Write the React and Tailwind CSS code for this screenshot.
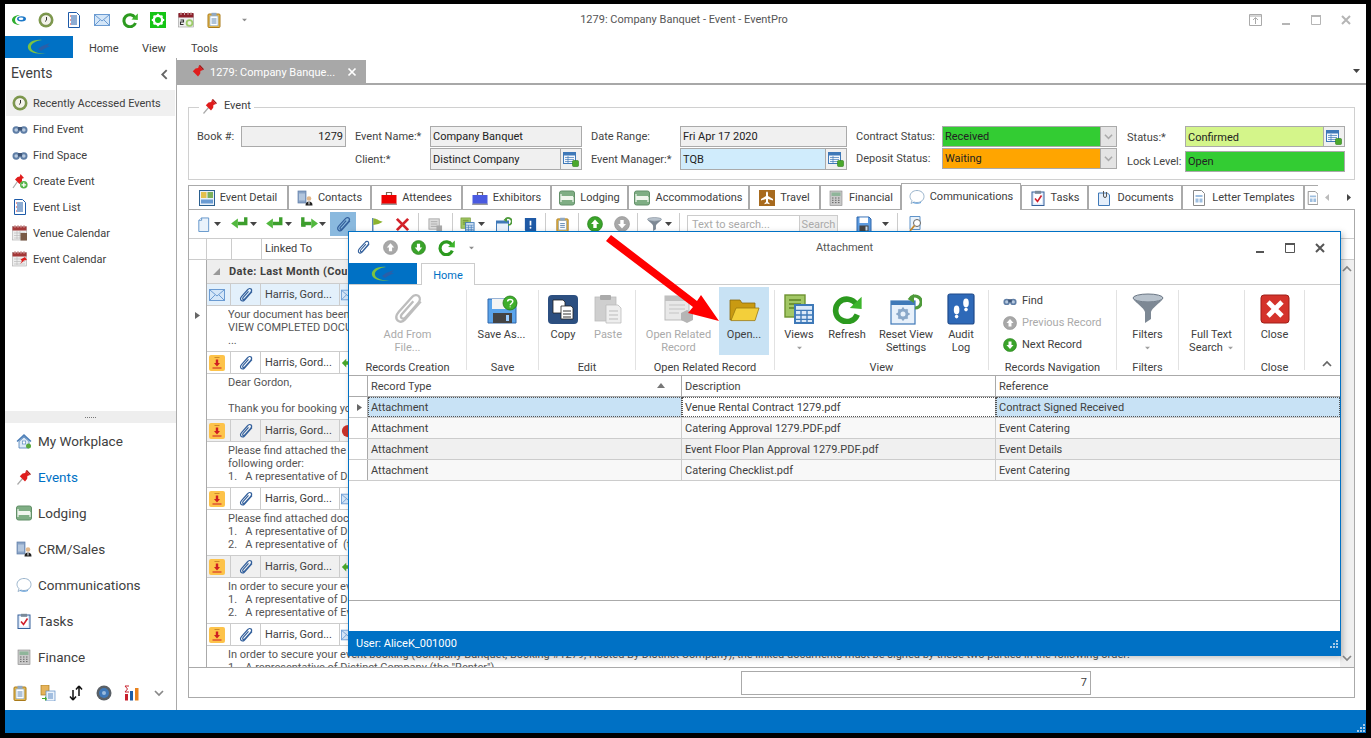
import React from "react";

const S = ({ s = 16, v = 16, children, cls = "" }) => (
  <svg viewBox={`0 0 ${v} ${v}`} width={s} height={s} className={"shrink-0 " + cls}>{children}</svg>
);

const Logo = () => (
  <svg viewBox="0 0 68 22" width={68} height={22} className="shrink-0">
    <path d="M37 4C27 3 22 8 23 12c1 4 8 7 19 5-8 1-15-1-16-5-1-4 4-7 11-8z" fill="#7cc242" />
    <path d="M33 13l4-3 8-3-3 3 3 0-6 3-3 2z" fill="#2a5fa8" />
  </svg>
);
const LogoSmall = ({ s = 16 }) => (
  <S s={s}>
    <path d="M9 3C4 3 1 5.500 1 8s3 5 8 5c-3-.5-5-2.500-5-5s2-4.500 5-5z" fill="#2fae2f" />
    <ellipse cx="10.500" cy="6.800" rx="4.500" ry="2.600" fill="#1c78c8" />
    <ellipse cx="10" cy="6.800" rx="2.400" ry="1.200" fill="#fff" />
  </S>
);
const Clock = ({ s = 16 }) => (
  <S s={s}>
    <circle cx="8" cy="8" r="7.500" fill="#7f9a4e" />
    <circle cx="8" cy="8" r="5.300" fill="#f3f3ea" stroke="#5c7434" strokeWidth=".6" />
    <path d="M8.500 5v3.200L7 9.500" stroke="#333" strokeWidth="1" fill="none" />
  </S>
);
const Doc = ({ s = 16 }) => (
  <S s={s}>
    <path d="M2.500.5h8l3 3v12h-11z" fill="#fff" stroke="#1d5aa8" />
    <path d="M5 4h6M5 6h6M5 8h6M5 10h6M5 12h6" stroke="#1d5aa8" strokeWidth="1" />
    <path d="M4 4h1M4 8h1M4 12h1" stroke="#d33" strokeWidth="1" />
  </S>
);
const Mail = ({ s = 16 }) => (
  <S s={s}>
    <rect x=".5" y="2.500" width="15" height="11" fill="#d4e6f8" stroke="#6b9bd2" />
    <path d="M1 3l7 6 7-6M1 13l5-5M15 13l-5-5" stroke="#6b9bd2" fill="none" />
  </S>
);
const Refresh = ({ s = 16 }) => (
  <S s={s}>
    <path d="M13 5.500A6 6 0 1 0 13.500 11" fill="none" stroke="#2c9a1f" strokeWidth="3" />
    <path d="M9.500 7.500L15.800 8V1.500z" fill="#3db52c" />
  </S>
);
const GearBox = ({ s = 16 }) => (
  <S s={s}>
    <rect width="16" height="16" fill="#15c515" />
    <circle cx="8" cy="8" r="4.200" fill="none" stroke="#fff" strokeWidth="2.400" />
    <path d="M8 1.800v2.400M8 11.800v2.400M1.800 8h2.400M11.800 8h2.400M3.600 3.600l1.700 1.700M10.700 10.700l1.700 1.700M3.600 12.400l1.700-1.700M10.700 5.300l1.700-1.700" stroke="#fff" strokeWidth="1.800" />
  </S>
);
const Cal20 = ({ s = 16 }) => (
  <S s={s}>
    <rect x=".5" y="2" width="15" height="13" fill="#eee" stroke="#999" strokeWidth=".6" />
    <rect x=".5" y="1" width="15" height="4.500" fill="#8c1f2a" />
    <path d="M3 0v3M6.500 0v3M10 0v3M13 0v3" stroke="#caa" />
    <circle cx="11.500" cy="11" r="3.800" fill="#9ccb6a" />
    <circle cx="11.500" cy="11" r="2" fill="#eef5e0" />
    <path d="M2.500 8h3v2h-3v2.500h3" stroke="#333" strokeWidth="1.100" fill="none" />
  </S>
);
const Clipboard = ({ s = 16 }) => (
  <S s={s}>
    <rect x="2" y="2" width="12" height="13.500" rx="1" fill="#e9b94a" stroke="#a97a1a" />
    <rect x="4" y="4" width="8" height="9.800" fill="#fff" stroke="#7aa0c8" strokeWidth=".6" />
    <rect x="5.500" y=".8" width="5" height="3" fill="#8fa8c4" />
    <path d="M5.500 7h5M5.500 9h5M5.500 11h5" stroke="#5d86b3" />
  </S>
);
const Binoc = ({ s = 16 }) => (
  <S s={s}>
    <circle cx="4.200" cy="9" r="3.700" fill="#5f7ea6" />
    <circle cx="11.800" cy="9" r="3.700" fill="#5f7ea6" />
    <rect x="6" y="6" width="4" height="3.500" fill="#3f5678" />
    <circle cx="4.200" cy="9" r="1.800" fill="#b8cadf" />
    <circle cx="11.800" cy="9" r="1.800" fill="#b8cadf" />
  </S>
);
const Pin = ({ s = 16 }) => (
  <S s={s}>
    <path d="M1.500 15.500L7 9" stroke="#aaa" strokeWidth="1.200" />
    <path d="M6.500 4.500L3.800 7.200 9 12.500l2.200-2.700.2-2.800L14 6 10 1.500 9.200 4z" fill="#e01c1c" />
    <path d="M10 1.500L14 6l1-.7L11 1z" fill="#a01010" />
  </S>
);
const PinPlus = ({ s = 16 }) => (
  <S s={s}>
    <path d="M1 15L5.500 8.500" stroke="#aaa" strokeWidth="1.200" />
    <path d="M5.500 4L3 6.500 7.500 11 10 8.500l0-2.800L12 5 8.500 1 7.800 3.500z" fill="#e01c1c" />
    <circle cx="11.800" cy="11.800" r="3.800" fill="#56b548" />
    <path d="M11.800 9.500v4.600M9.500 11.800h4.600" stroke="#fff" strokeWidth="1.300" />
  </S>
);
const CalV = ({ s = 16 }) => (
  <S s={s}>
    <rect x=".5" y="1.500" width="14" height="13.500" fill="#eee" stroke="#aaa" strokeWidth=".6" />
    <rect x=".5" y="1.500" width="14" height="4" fill="#a43838" />
    <path d="M3 0v3M6 0v3M9 0v3M12 0v3" stroke="#c88" />
    <path d="M2 8h11M2 10.500h11M2 13h11M5 6v8M8 6v8" stroke="#bbb" strokeWidth=".7" />
    <rect x="8.500" y="8" width="6.500" height="7.500" fill="#7a5a46" />
  </S>
);
const CalE = ({ s = 16 }) => (
  <S s={s}>
    <rect x=".5" y="1.500" width="14" height="13.500" fill="#eee" stroke="#aaa" strokeWidth=".6" />
    <rect x=".5" y="1.500" width="14" height="4" fill="#a43838" />
    <path d="M3 0v3M6 0v3M9 0v3M12 0v3" stroke="#c88" />
    <path d="M2 8h11M2 10.500h11M2 13h11M5 6v8" stroke="#bbb" strokeWidth=".7" />
    <path d="M8 13l2-3-1.500-1.500L13 6l2 3-3 .5-1.500 1.500z" fill="#e01c1c" />
  </S>
);
const House = ({ s = 16 }) => (
  <S s={s}>
    <path d="M.5 8L8 1l7.500 7-1.300 1L8 3.500 1.800 9z" fill="#4d7fb8" />
    <path d="M3 8.500V15h10V8.500L8 4z" fill="#dce9f6" stroke="#4d7fb8" strokeWidth=".8" />
    <rect x="6.300" y="8" width="3.400" height="3" fill="#fff" stroke="#4d7fb8" strokeWidth=".6" />
    <circle cx="12.500" cy="13" r="2.500" fill="#56a83c" />
  </S>
);
const Bed = ({ s = 16 }) => (
  <S s={s}>
    <rect x=".5" y="1" width="15" height="14" rx="2" fill="#7fae84" stroke="#628f68" />
    <rect x="2" y="6" width="12" height="4" fill="#f1f6ee" />
    <path d="M2 4v8M14 7v5" stroke="#f1f6ee" strokeWidth="1.200" />
  </S>
);
const Crm = ({ s = 16 }) => (
  <S s={s}>
    <rect x="1" y="1" width="8" height="12" fill="#8aa4c6" stroke="#5d7ca6" strokeWidth=".7" />
    <path d="M3 3.500v7M5 3.500v7M7 3.500v7" stroke="#dce8f5" strokeWidth="1" />
    <circle cx="12" cy="8.500" r="2.300" fill="#e2b88c" />
    <path d="M8.500 15.500c0-3 1.500-4 3.500-4s3.500 1 3.500 4z" fill="#222" />
    <path d="M11.500 11.500h1v3h-1z" fill="#fff" />
  </S>
);
const Bubble = ({ s = 16 }) => (
  <S s={s}>
    <path d="M8 1.500c4 0 7 2.500 7 6s-3 6-7 6c-1 0-2 0-3-.5l-3 1.500 1-2.800C1.800 10.500 1 9 1 7.500c0-3.500 3-6 7-6z" fill="#fff" stroke="#9ab4cc" />
    <path d="M4 13.500c2 1 6 1 8 0" stroke="#5a9ad8" fill="none" />
  </S>
);
const Tasks = ({ s = 16 }) => (
  <S s={s}>
    <rect x="2" y="2" width="12" height="13.500" fill="#dfeafa" stroke="#36609a" />
    <rect x="4" y="4" width="8" height="9.500" fill="#fff" />
    <rect x="5" y=".8" width="6" height="3" fill="#7a8a99" />
    <path d="M5 8.500L7.500 11.500 11.500 5.500" stroke="#d0202c" strokeWidth="1.600" fill="none" />
  </S>
);
const Calc = ({ s = 16 }) => (
  <S s={s}>
    <rect x="2" y="1" width="12" height="14.500" fill="#c9c9c9" stroke="#888" strokeWidth=".6" />
    <rect x="3.500" y="2.500" width="9" height="3.500" fill="#8fb59a" />
    <path d="M4 8h1.500M7 8h1.500M10 8h1.500M4 10.300h1.500M7 10.300h1.500M10 10.300h1.500M4 12.600h1.500M7 12.600h1.500M10 12.600h1.500" stroke="#666" />
  </S>
);
const Transfer = ({ s = 16 }) => (
  <S s={s}>
    <path d="M5 5v10M5 15l-3-3.500M5 15l3-3.500M11 11V1M11 1L8 4.500M11 1l3 3.500" stroke="#111" strokeWidth="1.500" fill="none" />
  </S>
);
const Disc = ({ s = 16 }) => (
  <S s={s}>
    <circle cx="8" cy="8" r="7.500" fill="#5a6066" />
    <circle cx="8" cy="8" r="5" fill="#3f78b8" />
    <circle cx="8" cy="8" r="2" fill="#9bbcde" />
  </S>
);
const Chart = ({ s = 16 }) => (
  <S s={s}>
    <path d="M5 1H1l2.500 3L1 7h4" stroke="#c8202c" fill="none" strokeWidth="1" />
    <rect x="1" y="9" width="3" height="6.500" fill="#c8202c" />
    <rect x="6" y="6" width="3" height="9.500" fill="#1c5fa8" />
    <rect x="11" y="3" width="3.500" height="12.500" fill="#e8821e" />
  </S>
);
const DocTrans = ({ s = 16 }) => (
  <S s={s}>
    <rect x="1" y="0" width="8" height="10" fill="#e6b35a" stroke="#a77b22" strokeWidth=".7" />
    <rect x="6" y="6" width="9" height="10" fill="#eaf2fb" stroke="#5a8ac4" strokeWidth=".7" />
    <path d="M8 9h5M8 11h5M8 13h5" stroke="#5a8ac4" />
    <path d="M2 13h3v-2l2 3-2 2v-2H2z" fill="#43a82c" />
  </S>
);
const Panels = ({ s = 16 }) => (
  <S s={s}>
    <rect x=".5" y=".5" width="15" height="15" fill="#e8f0f8" stroke="#2a5f8f" />
    <rect x="2" y="2" width="5.500" height="6" fill="#e2c04c" />
    <rect x="8.500" y="2" width="5.500" height="6" fill="#7cb05a" />
    <rect x="2" y="9.500" width="12" height="4" fill="#6a9bd2" />
  </S>
);
const Box = ({ s = 16, c = "#e00" }) => (
  <S s={s}>
    <rect x=".5" y="5" width="15" height="10" fill={c} />
    <rect x=".5" y="13.500" width="15" height="1.500" fill="#999" />
    <path d="M5.500 5V2.500h5V5" stroke="#7a6a5a" strokeWidth="1.200" fill="none" />
  </S>
);
const Plane = ({ s = 16 }) => (
  <S s={s}>
    <rect width="16" height="16" fill="#a76a1e" />
    <path d="M8 1.500c.8 0 1 1 1 2v2.500l5 3v1.500l-5-1.500v3l1.500 1.200v1L8 13.500l-2.500.7v-1L7 12V9L2 10.500V9l5-3V3.500c0-1 .2-2 1-2z" fill="#fff" />
  </S>
);
const DocClip = ({ s = 16 }) => (
  <S s={s}>
    <path d="M2.500 3h9l2 2v10.500h-11z" fill="#e4eefa" stroke="#3f79b8" />
    <path d="M7.500 1v5a1.500 1.500 0 0 0 3 0V2" stroke="#555" fill="none" />
  </S>
);
const Template = ({ s = 16 }) => (
  <S s={s}>
    <path d="M2.500.5h8l3 3v12h-11z" fill="#fff" stroke="#888" />
    <path d="M4.500 5h7v2h-7zM4.500 8.500h3v4h-3zM8.500 8.500h3v4h-3z" fill="#9fbfe0" />
  </S>
);
const Clip = ({ s = 16, c = "#33609c", w = 1.2 }) => (
  <S s={s}>
    <path d="M14 4.500L6.500 13c-1.800 2-4.300.5-4-1.500.2-.9.6-1.500 1.200-2.200L9.800 2.500c1-1.200 2.600-1.300 3.300-.5s.6 2.200-.4 3.300L6.800 12c-.7.800-1.700.6-2 .1s-.1-1.100.4-1.700l5.300-6" fill="none" stroke={c} strokeWidth={w} />
  </S>
);
const NewDoc = ({ s = 16 }) => (
  <S s={s}>
    <path d="M3 3.500L6 1h7.500v14.500H3z" fill="#e9f2fb" stroke="#5f93c9" />
    <path d="M3 3.500h3V1" fill="#fff" stroke="#5f93c9" />
  </S>
);
const GreenBack = ({ s = 16 }) => (
  <S s={s}>
    <path d="M14 2v5.500H7" fill="none" stroke="#3c9e2c" strokeWidth="3" />
    <path d="M7 3L1 7.500 7 12z" fill="#52b83f" />
  </S>
);
const GreenBoth = ({ s = 16 }) => (
  <S s={s}>
    <path d="M2.500 2v5.500H10" fill="none" stroke="#3c9e2c" strokeWidth="3" />
    <path d="M10 3l6 4.500-6 4.500z" fill="#52b83f" />
    <path d="M1 7.500h4v3H1z" fill="#3c9e2c" />
  </S>
);
const Flag = ({ s = 16 }) => (
  <S s={s}>
    <path d="M3 1v15" stroke="#2f5f9c" strokeWidth="1.200" />
    <path d="M3.500 1.500c4 0 5 2 10 3.500-3 2-6 3-10 3.500z" fill="#8cb32f" />
  </S>
);
const RedX = ({ s = 16 }) => (
  <S s={s}>
    <path d="M2 2l12 12M14 2L2 14" stroke="#d3222a" strokeWidth="3" />
  </S>
);
const GrayGrid = ({ s = 16 }) => (
  <S s={s}>
    <rect x="1" y="2" width="11" height="11" fill="#ddd" stroke="#aaa" />
    <path d="M3 5h7M3 7.500h7M3 10h7" stroke="#aaa" />
    <rect x="9" y="9" width="6" height="6" fill="#aaa" />
  </S>
);
const Views = ({ s = 16 }) => (
  <S s={s}>
    <rect x="1" y="1" width="10" height="11" fill="#a2c765" stroke="#6d9330" strokeWidth=".7" />
    <path d="M3 3.500h6M3 5.500h6M3 7.500h3" stroke="#5d8226" strokeWidth=".8" />
    <rect x="6" y="6" width="9" height="9" fill="#dbe9f8" stroke="#3f79b8" />
    <path d="M6.500 8.700h8M6.500 11h8M6.500 13.200h8M9 8.700V15M12 8.700V15" stroke="#3f79b8" strokeWidth=".7" />
  </S>
);
const WinBack = ({ s = 16 }) => (
  <S s={s}>
    <rect x=".5" y="5" width="12" height="10.500" fill="#e8f1fb" stroke="#3f79b8" />
    <rect x=".5" y="5" width="12" height="2.500" fill="#3f79b8" />
    <path d="M9 4a3.500 3.500 0 1 1 3 5" fill="none" stroke="#4e9a3a" strokeWidth="1.700" />
    <path d="M7.500 4L11 1.500V6z" fill="#4e9a3a" />
  </S>
);
const WinGear = ({ s = 16 }) => (
  <S s={s}>
    <rect x=".5" y="4" width="12" height="11.500" fill="#e8f1fb" stroke="#3f79b8" strokeWidth=".6" />
    <rect x=".5" y="4" width="12" height="2" fill="#3f79b8" />
    <circle cx="6.500" cy="10.500" r="2" fill="none" stroke="#8aa8c9" strokeWidth="1.500" />
    <path d="M6.500 7.200v1M6.500 12.800v1M3.200 10.500h1M8.800 10.500h1M4.200 8.200l.7.700M8.100 12.100l.7.700M4.200 12.800l.7-.7M8.100 8.900l.7-.7" stroke="#8aa8c9" />
    <path d="M10 3a3 3 0 1 1 2.500 4.500" fill="none" stroke="#4e9a3a" strokeWidth="1.600" />
    <path d="M8.800 3L12 .5V5z" fill="#4e9a3a" />
  </S>
);
const BookAlert = ({ s = 16 }) => (
  <S s={s}>
    <path d="M2 1h12v14.500H4a2 2 0 0 1-2-2z" fill="#1f5aa6" />
    <path d="M8 4v5" stroke="#fff" strokeWidth="1.800" />
    <circle cx="8" cy="11.500" r="1" fill="#fff" />
  </S>
);
const BookFeet = ({ s = 16 }) => (
  <S s={s}>
    <rect x="1.500" y=".5" width="13" height="15" rx="1" fill="#2e69b8" stroke="#1f4a8a" strokeWidth=".6" />
    <ellipse cx="10.500" cy="5" rx="1.400" ry="2.200" fill="#fff" />
    <circle cx="10.500" cy="8.300" r=".9" fill="#fff" />
    <ellipse cx="5.800" cy="8.500" rx="1.400" ry="2.200" fill="#fff" />
    <circle cx="5.800" cy="11.800" r=".9" fill="#fff" />
  </S>
);
const CircArrow = ({ s = 16, up, gray }) => (
  <S s={s}>
    <circle cx="8" cy="8" r="7.500" fill={gray ? "#a8a8a8" : "#3aa32a"} stroke={gray ? "#8f8f8f" : "#237a18"} strokeWidth=".6" />
    <path d={up ? "M8 3.500L4 8h2.300v4h3.400V8H12z" : "M8 12.500L4 8h2.300V4h3.400v4H12z"} fill="#fff" />
  </S>
);
const Funnel = ({ s = 16 }) => (
  <S s={s}>
    <ellipse cx="8" cy="2.500" rx="7.500" ry="2" fill="#b8c2cc" stroke="#6a7684" strokeWidth=".5" />
    <path d="M.6 3C2 5 6 7.500 6.500 9.500V15L9.500 13V9.500C10 7.500 14 5 15.400 3 13 5 3 5 .6 3z" fill="#7d8894" />
  </S>
);
const Save = ({ s = 16 }) => (
  <S s={s}>
    <path d="M1 1h12l2 2v12.500H1z" fill="#5d9be0" stroke="#2f66ac" />
    <rect x="3.500" y="1.500" width="8.500" height="5.500" fill="#fff" />
    <rect x="3.500" y="9.500" width="9" height="6" fill="#444" />
    <rect x="9.500" y="10.500" width="2" height="4" fill="#cde" />
  </S>
);
const DocSearch = ({ s = 16 }) => (
  <S s={s}>
    <path d="M3 .5h10v13H3z" fill="#e9f2fb" stroke="#5f93c9" />
    <circle cx="10" cy="7" r="3.500" fill="#fff" stroke="#666" />
    <path d="M7.500 9.500L3 15" stroke="#c88a2c" strokeWidth="1.800" />
  </S>
);
const Imp = ({ s = 16 }) => (
  <S s={s}>
    <rect width="16" height="16" rx="2" fill="#fdc34a" />
    <path d="M6.800 4.500h2.400V8H11L8 11.500 5 8h1.800z" fill="#cf1f22" />
    <path d="M3.500 13h9" stroke="#cf1f22" />
    <path d="M5.500 2.500h5" stroke="#cc8a2c" />
  </S>
);
const LookupBtn = () => (
  <S s={16}>
    <rect x=".5" y="1.500" width="12" height="11" fill="#f3f7fc" stroke="#3f79b8" />
    <rect x=".5" y="1.500" width="12" height="3" fill="#3f79b8" />
    <path d="M2 6.500h9M2 8.500h9M2 10.500h9M5 5v7" stroke="#3f79b8" strokeWidth=".7" />
    <rect x="9.500" y="9.500" width="6" height="6" rx="1" fill="#4aa82c" stroke="#2e7c18" strokeWidth=".6" />
  </S>
);
const Tri = ({ cls = "" }) => (
  <svg viewBox="0 0 7 4" width={7} height={4} className={"shrink-0 " + cls}>
    <path d="M0 0h7L3.500 4z" fill="#444" />
  </svg>
);
const Chev = ({ dir = "down", c = "#777", s = 10 }) => {
  const d = { down: "M1 3l4 4 4-4", up: "M1 7l4-4 4 4", left: "M7 1L3 5l4 4", right: "M3 1l4 4-4 4" }[dir];
  return (
    <S s={s} v={10}>
      <path d={d} fill="none" stroke={c} strokeWidth="1.700" />
    </S>
  );
};
const BigClip = () => (
  <S s={34}>
    <path d="M14 4.500L6.500 13c-1.800 2-4.300.5-4-1.500.2-.9.6-1.500 1.200-2.200L9.800 2.500c1-1.200 2.600-1.300 3.300-.5s.6 2.200-.4 3.300L6.800 12c-.7.800-1.700.6-2 .1s-.1-1.100.4-1.700l5.300-6" fill="none" stroke="#bdbdbd" strokeWidth="1.100" />
  </S>
);
const SaveAs = () => (
  <S s={32}>
    <path d="M1 3h13l1 1.500V15H1z" fill="#5ba4ea" stroke="#2f66ac" strokeWidth=".5" />
    <rect x="3" y="3" width="9" height="5" fill="#f4f4f4" />
    <rect x="3.500" y="10" width="9.500" height="5" fill="#444" />
    <rect x="10" y="11" width="1.500" height="3" fill="#9cf" />
    <circle cx="12" cy="5" r="3.500" fill="#3fae2c" stroke="#237a18" strokeWidth=".4" />
    <path d="M10.800 4.300c0-1.400 2.600-1.400 2.600 0 0 .9-1.300 1-1.300 1.800M12.100 6.800v.3" stroke="#fff" strokeWidth=".7" fill="none" />
  </S>
);
const Copy = () => (
  <S s={32}>
    <rect x=".5" y="1" width="15" height="14.500" rx="2" fill="#2c4f80" />
    <path d="M3 3.500h5l1 1V10H3z" fill="#fff" stroke="#222" strokeWidth=".4" />
    <path d="M7 6.500h5l1 1V13H7z" fill="#fff" stroke="#222" strokeWidth=".4" />
    <path d="M8 9h4M8 10.500h4M8 12h4" stroke="#333" strokeWidth=".5" />
  </S>
);
const Paste = () => (
  <S s={32}>
    <rect x="1.500" y="2" width="10.500" height="12" fill="#cfcfcf" stroke="#bbb" strokeWidth=".4" />
    <rect x="4" y="1" width="5.500" height="2.500" rx=".5" fill="#aaa" />
    <path d="M7 6h6l1.500 1.500V15H7z" fill="#eee" stroke="#bbb" strokeWidth=".4" />
    <path d="M8.500 9h4.500M8.500 11h4.500M8.500 13h4.500" stroke="#bbb" strokeWidth=".5" />
  </S>
);
const OpenRel = () => (
  <S s={32}>
    <rect x="1" y="1.500" width="12" height="12" fill="#e8e8e8" stroke="#bbb" strokeWidth=".5" />
    <rect x="1" y="1.500" width="12" height="2.500" fill="#c0c0c0" />
    <path d="M3 6h8M3 8h8M3 10h5" stroke="#c4c4c4" strokeWidth=".6" />
    <path d="M9 10l3-1.500 3 1.500v3.500L12 15l-3-1.500z" fill="#b5b5b5" />
  </S>
);
const Folder = () => (
  <S s={32}>
    <path d="M1 13.500V3.500h5l1 1.500h6.500v3z" fill="#c99a12" stroke="#8a6a10" strokeWidth=".4" />
    <path d="M1.500 13.800L4 7.500h11.500l-2 6.300z" fill="#f3cf3a" stroke="#9a7a10" strokeWidth=".4" />
  </S>
);
const CloseBig = () => (
  <S s={32}>
    <rect x="1" y="1" width="14" height="14" rx="1.500" fill="#d4332b" stroke="#a01f18" strokeWidth=".5" />
    <path d="M4.500 4.500l7 7M11.500 4.500l-7 7" stroke="#fff" strokeWidth="2.400" />
  </S>
);

const WinBtns = ({ c }) => (
  <>
    <svg width="12" height="12" viewBox="0 0 12 12" className="shrink-0"><path d="M2 10h8" stroke={c} strokeWidth="2" /></svg>
    <svg width="12" height="12" viewBox="0 0 12 12" className="shrink-0"><path d="M1.500 1.500h9v9h-9z" fill="none" stroke={c} /><path d="M1 2h10" stroke={c} strokeWidth="2" /></svg>
    <svg width="12" height="12" viewBox="0 0 12 12" className="shrink-0"><path d="M2 2l8 8M10 2l-8 8" stroke={c} strokeWidth="2" /></svg>
  </>
);

const sideItems = [
  [Clock, "Recently Accessed Events", true],
  [Binoc, "Find Event"],
  [Binoc, "Find Space"],
  [PinPlus, "Create Event"],
  [Doc, "Event List"],
  [CalV, "Venue Calendar"],
  [CalE, "Event Calendar"],
];
const navItems = [
  [House, "My Workplace"],
  [Pin, "Events", true],
  [Bed, "Lodging"],
  [Crm, "CRM/Sales"],
  [Bubble, "Communications"],
  [Tasks, "Tasks"],
  [Calc, "Finance"],
];

function Sidebar() {
  return (
    <aside className="w-[172px] shrink-0 border-r border-[#aaa] flex flex-col">
      <div className="h-[32px] flex items-center justify-between pl-[6px] pr-[6px]">
        <span className="text-[14px] leading-none -mt-[2px]">Events</span>
        <Chev dir="left" c="#666" s={11} />
      </div>
      <div className="flex-1">
        {sideItems.map(([Ic, t, on]) => (
          <div key={t} className={"h-[26px] ml-px mr-px flex items-center gap-[5px] pl-[6px] " + (on ? "bg-[#f0f0f0]" : "")}>
            <Ic s={16} />
            <span className="whitespace-nowrap pt-[2px]">{t}</span>
          </div>
        ))}
      </div>
      <div className="h-[12px] bg-[#eeeeee] flex items-center justify-center gap-px">
        {[0, 1, 2, 3, 4, 5].map((i) => (
          <span key={i} className="w-px h-px bg-[#777]" />
        ))}
      </div>
      <div>
        {navItems.map(([Ic, t, on]) => (
          <div key={t} className={"h-[36px] flex items-center gap-[6px] pl-[11px] text-[13.5px] " + (on ? "text-[#0071c5]" : "")}>
            <Ic s={16} />
            <span>{t}</span>
          </div>
        ))}
      </div>
      <div className="h-[35px] flex items-center pl-[7px] gap-[12px]">
        <Clipboard s={16} />
        <DocTrans s={16} />
        <Transfer s={16} />
        <Disc s={16} />
        <Chart s={16} />
        <span className="ml-[2px]"><Chev dir="down" c="#888" s={10} /></span>
      </div>
    </aside>
  );
}

const Field = ({ w, h = "h-[21px]", lh = "leading-[19px]", bg = "bg-[#f0f0f0]", text, right, btn, drop }) => (
  <div className={`${w} ${h} ${bg} border border-[#aaa] flex items-stretch`}>
    <span className={`flex-1 px-[2px] ${lh} truncate text-[#222] ` + (right ? "text-right" : "")}>{text}</span>
    {btn && (
      <span className="w-[21px] shrink-0 border-l border-[#aaa] bg-[#f0f0f0] flex items-center justify-center"><LookupBtn /></span>
    )}
    {drop && (
      <span className="w-[16px] shrink-0 border-l border-[#aaa] bg-[#e4e4e4] flex items-center justify-center"><Chev c="#aaa" s={9} /></span>
    )}
  </div>
);

const Lab = ({ w, h = "leading-[21px]", children }) => (
  <span className={`${w} ${h} whitespace-nowrap shrink-0`}>{children}</span>
);

function EventGroup() {
  return (
    <fieldset className="border border-[#d0d0d0] h-[83px] min-w-0">
      <legend className="ml-[10px] px-[3px] h-[20px] flex items-center gap-[6px] pb-[2px]">
        <Pin s={16} />
        <span>Event</span>
      </legend>
      <div className="flex pt-[9px] pl-[8px] text-[#444]">
        <div className="w-[158px] flex items-start">
          <Lab w="w-[44px]">Book #:</Lab>
          <Field w="w-[105px]" text="1279" right />
        </div>
        <div className="w-[236px] flex flex-col gap-[1px]">
          <div className="flex"><Lab w="w-[75px]">Event Name:*</Lab><Field w="w-[152px]" text="Company Banquet" /></div>
          <div className="flex"><Lab w="w-[75px]" h="leading-[24px]">Client:*</Lab><Field w="w-[152px]" h="h-[22px]" lh="leading-[21px]" text="Distinct Company" btn /></div>
        </div>
        <div className="w-[265px] flex flex-col gap-[1px]">
          <div className="flex"><Lab w="w-[89px]">Date Range:</Lab><Field w="w-[167px]" text="Fri Apr 17 2020" /></div>
          <div className="flex"><Lab w="w-[89px]" h="leading-[24px]">Event Manager:*</Lab><Field w="w-[167px]" h="h-[22px]" lh="leading-[21px]" bg="bg-[#d0ecfc]" text="TQB" btn /></div>
        </div>
        <div className="w-[271px] flex flex-col gap-[1px]">
          <div className="flex"><Lab w="w-[86px]">Contract Status:</Lab><Field w="w-[175px]" bg="bg-[#33cc33]" text="Received" drop /></div>
          <div className="flex"><Lab w="w-[86px]">Deposit Status:</Lab><Field w="w-[175px]" bg="bg-[#ffa500]" text="Waiting" drop /></div>
        </div>
        <div className="flex flex-col gap-[2px]">
          <div className="flex"><Lab w="w-[58px]" h="leading-[23px]">Status:*</Lab><Field w="w-[160px]" lh="leading-[21px]" bg="bg-[#d4f58a]" text="Confirmed" btn /></div>
          <div className="flex"><Lab w="w-[58px]">Lock Level:</Lab><Field w="w-[160px]" bg="bg-[#33cc33]" text="Open" /></div>
        </div>
      </div>
    </fieldset>
  );
}

const tabs = [
  [Panels, "Event Detail", "w-[100px]"],
  [Crm, "Contacts", "w-[83px]"],
  [Box, "Attendees", "w-[91px]", "#e00"],
  [Box, "Exhibitors", "w-[89px]", "#4a5ae0"],
  [Bed, "Lodging", "w-[77px]"],
  [Bed, "Accommodations", "w-[121px]"],
  [Plane, "Travel", "w-[71px]"],
  [Calc, "Financial", "w-[81px]"],
  [Bubble, "Communications", "w-[120px]", null, true],
  [Tasks, "Tasks", "w-[67px]"],
  [DocClip, "Documents", "w-[94px]"],
  [Template, "Letter Templates", "w-[122px]"],
];

function TabStrip() {
  return (
    <div className="h-[27px] flex items-end shrink-0">
      {tabs.map(([Ic, t, w, c, on]) => (
        <div
          key={t}
          className={
            w +
            " flex items-center justify-center gap-[5px] border-l border-r border-t border-[#aaa] bg-white whitespace-nowrap " +
            (on ? "h-[27px] relative z-10" : "h-[25px]")
          }
        >
          <Ic s={16} c={c || undefined} />
          <span>{t}</span>
        </div>
      ))}
      <div className="w-[14px] h-[25px] border-t border-l border-[#aaa] flex items-center pl-px overflow-hidden">
        <Template s={14} />
      </div>
      <div className="h-[25px] flex items-center pl-[6px] gap-[14px]">
        <S s={7} v={7}><path d="M5 0L1 3.500 5 7z" fill="#bbb" /></S>
        <S s={7} v={7}><path d="M2 0l4 3.500L2 7z" fill="#444" /></S>
      </div>
    </div>
  );
}

const Sep = () => <span className="w-px h-[22px] bg-[#ccc] shrink-0" />;

function Toolbar() {
  return (
    <div className="h-[28px] flex items-center pl-[7px] shrink-0 overflow-hidden">
      <NewDoc s={15} /><Tri cls="ml-[3px] mr-[9px]" />
      <GreenBack s={18} /><Tri cls="ml-[2px] mr-[8px]" />
      <GreenBack s={18} /><Tri cls="ml-[2px] mr-[8px]" />
      <GreenBoth s={18} /><Tri cls="ml-[1px] mr-[4px]" />
      <span className="w-[26px] h-[24px] bg-[#8ab9de] flex items-center justify-center"><Clip s={17} /></span>
      <span className="ml-[14px]"><Flag s={15} /></span>
      <span className="ml-[10px] mr-[8px]"><RedX s={15} /></span>
      <Sep />
      <span className="ml-[9px] mr-[9px]"><GrayGrid s={15} /></span>
      <Sep />
      <span className="ml-[7px]"><Views s={15} /></span><Tri cls="ml-[3px] mr-[11px]" />
      <WinBack s={16} />
      <span className="ml-[11px] mr-[7px]"><BookAlert s={15} /></span>
      <Sep />
      <span className="ml-[9px] mr-[8px]"><Clipboard s={15} /></span>
      <Sep />
      <span className="ml-[8px]"><CircArrow up s={16} /></span>
      <span className="ml-[11px] mr-[7px]"><CircArrow gray s={16} /></span>
      <Sep />
      <span className="ml-[9px]"><Funnel s={15} /></span><Tri cls="ml-[3px] mr-[7px]" />
      <Sep />
      <div className="ml-[7px] w-[151px] h-[18px] border border-[#ccc] flex text-[#aaa]">
        <span className="flex-1 px-[4px] leading-[17px]">Text to search...</span>
        <span className="w-[38px] border-l border-[#ccc] bg-[#f0f0f0] text-center leading-[17px]">Search</span>
      </div>
      <span className="ml-[10px] mr-[8px]"><Sep /></span>
      <Save s={16} /><Tri cls="ml-[10px] mr-[8px]" />
      <Sep />
      <span className="ml-[9px]"><DocSearch s={16} /></span>
    </div>
  );
}

const rows = [
  { ic: Mail, stat: "doc", bg: "bg-[#e3f0fb]", lines: ["Your document has been", "VIEW COMPLETED DOCUMENT", "..."] },
  { ic: Imp, stat: "green", bg: "bg-white", lines: ["Dear Gordon,", "", "Thank you for booking your"] },
  { ic: Imp, stat: "red", bg: "bg-[#f0f0f0]", lines: ["Please find attached the documents", "following order:", "1.   A representative of Distinct"] },
  { ic: Imp, stat: "doc", bg: "bg-white", lines: ["Please find attached documents", "1.   A representative of Distinct", "2.   A representative of  (the"] },
  { ic: Imp, stat: "green", bg: "bg-[#f0f0f0]", lines: ["In order to secure your event", "1.   A representative of Distinct", "2.   A representative of Event"] },
  { ic: Imp, stat: "doc", bg: "bg-white", lines: ["In order to secure your event booking (Company Banquet, Booking #1279, Hosted By Distinct Company), the linked documents must be signed by these two parties in the following order:", "1.   A representative of Distinct Company (the \"Renter\")"] },
];

const Stat = ({ k }) =>
  k === "doc" ? <Mail s={14} /> : k === "red" ? (
    <S s={14}><circle cx="8" cy="8" r="7" fill="#c8332b" /></S>
  ) : (
    <S s={14}><path d="M1 8l5-5v3h8v4H6v3z" fill="#4aa82c" /></S>
  );

function List() {
  return (
    <div className="flex-1 flex min-h-0 overflow-hidden">
      <div className="w-[18px] shrink-0 border-r border-[#aaa] pt-[52px] pl-[5px]">
        <S s={7} v={7}><path d="M1 0l5 3.500L1 7z" fill="#666" /></S>
      </div>
      <div className="flex-1 min-w-0">
        <div className="h-[24px] bg-[#eeeeee] flex items-center font-bold border-b border-[#ccc] pl-[6px] gap-[9px]">
          <S s={7} v={7}><path d="M7 0v7H0z" fill="#999" /></S>
          <span className="whitespace-nowrap w-[118px] overflow-hidden pt-[2px] tracking-[0.4px]">Date: Last Month (Count: 7)</span>
        </div>
        {rows.map((r, i) => (
          <div key={i} className="h-[68px]">
            <div className={"h-[22px] flex border-b border-[#ccc] items-stretch " + r.bg}>
              <span className="w-[24px] border-r border-[#ccc] flex items-center pl-[2px]"><r.ic s={16} /></span>
              <span className="w-[30px] border-r border-[#ccc] flex items-center justify-center"><Clip s={16} /></span>
              <span className="w-[79px] border-r border-[#ccc] pl-[4px] leading-[21px] whitespace-nowrap">Harris, Gord...</span>
              <span className="w-[24px] flex items-center pl-[1px]"><Stat k={r.stat} /></span>
            </div>
            <div className="h-[46px] pl-[21px] pt-[2px] leading-[13px] text-[#555] border-b border-[#ccc] overflow-hidden">
              {r.lines.map((l, j) => (
                <div key={j} className={"h-[13px] whitespace-pre " + (i < 5 ? "w-[120px] overflow-hidden" : "")}>{l}</div>
              ))}
            </div>
          </div>
        ))}
      </div>
      <div className="w-[14px] shrink-0 bg-[#f0f0f0] flex flex-col justify-between items-center py-[4px]">
        <Chev dir="up" c="#888" s={10} />
        <Chev dir="down" c="#888" s={10} />
      </div>
    </div>
  );
}

const Big = ({ w, icon, lines, off, chev }) => (
  <div className={`${w} h-[68px] shrink-0 flex flex-col items-center pt-[3px] ` + (off ? "text-[#aaa]" : "")}>
    <div className="h-[38px] flex items-center justify-center">{icon}</div>
    {lines.map((l) => (
      <div key={l} className="leading-[13px] whitespace-nowrap text-center">{l}</div>
    ))}
    {chev && <Tri cls="opacity-50 mt-[5px] scale-75" />}
  </div>
);

const Group = ({ w, label, children, cls = "" }) => (
  <div className={`${w} shrink-0 flex flex-col h-[88px]`}>
    <div className={"h-[72px] shrink-0 flex " + cls}>{children}</div>
    <div className="text-center leading-[16px] pt-px whitespace-nowrap">{label}</div>
  </div>
);
const RSep = () => <span className="w-px h-[80px] mt-[3px] bg-[#e2e2e2] shrink-0" />;

const tableRows = [
  ["Attachment", "Venue Rental Contract 1279.pdf", "Contract Signed Received"],
  ["Attachment", "Catering Approval 1279.PDF.pdf", "Event Catering"],
  ["Attachment", "Event Floor Plan Approval 1279.PDF.pdf", "Event Details"],
  ["Attachment", "Catering Checklist.pdf", "Event Catering"],
];

function Modal() {
  return (
    <div className="absolute left-[348px] top-[231px] w-[993px] h-[425px] bg-white border border-[#0071c5] shadow-[2px_2px_6px_rgba(0,0,0,0.25)] flex flex-col">
      <div className="h-[31px] shrink-0 flex items-center pl-[7px]">
        <Clip s={15} />
        <span className="ml-[12px]"><CircArrow up gray s={15} /></span>
        <span className="ml-[13px]"><CircArrow s={15} /></span>
        <span className="ml-[12px]"><Refresh s={17} /></span>
        <Tri cls="ml-[13px] opacity-60 scale-75" />
        <span className="flex-1 text-center text-[#555] pr-[40px] pt-[2px]">Attachment</span>
        <div className="flex items-center gap-[18px] pr-[14px]"><WinBtns c="#555" /></div>
      </div>
      <div className="h-[22px] shrink-0 flex border-b border-[#ccc]">
        <div className="w-[68px] h-[21px] bg-[#0071c5]"><Logo /></div>
        <div className="ml-[4px] w-[54px] h-[22px] bg-white border border-b-0 border-[#ccc] text-[#0071c5] text-center leading-[23px]">Home</div>
      </div>
      <div className="h-[91px] shrink-0 flex border-b border-[#aaa] pt-[2px]">
        <Group w="w-[117px]" label="Records Creation" cls="justify-center">
          <Big w="w-[80px]" off icon={<BigClip />} lines={["Add From", "File..."]} />
        </Group>
        <RSep />
        <Group w="w-[71px]" label="Save" cls="justify-center pr-[2px]">
          <Big w="w-[66px]" icon={<SaveAs />} lines={["Save As..."]} />
        </Group>
        <RSep />
        <Group w="w-[96px]" label="Edit" cls="pl-[2px]">
          <Big w="w-[44px]" icon={<Copy />} lines={["Copy"]} />
          <Big w="w-[46px]" off icon={<Paste />} lines={["Paste"]} />
        </Group>
        <RSep />
        <Group w="w-[138px]" label="Open Related Record" cls="pl-[2px]">
          <Big w="w-[81px]" off icon={<OpenRel />} lines={["Open Related", "Record"]} />
          <div className="bg-[#c8e2f4] h-[68px]"><Big w="w-[50px]" icon={<Folder />} lines={["Open..."]} /></div>
        </Group>
        <RSep />
        <Group w="w-[213px]" label="View" cls="pl-[2px]">
          <Big w="w-[44px]" icon={<Views s={32} />} lines={["Views"]} chev />
          <Big w="w-[52px]" icon={<Refresh s={30} />} lines={["Refresh"]} />
          <Big w="w-[66px]" icon={<WinGear s={32} />} lines={["Reset View", "Settings"]} />
          <Big w="w-[44px]" icon={<BookFeet s={32} />} lines={["Audit", "Log"]} />
        </Group>
        <RSep />
        <Group w="w-[127px]" label="Records Navigation">
          <div className="pl-[14px] pt-[3px] flex flex-col">
            <div className="h-[22px] flex items-center gap-[5px]"><Binoc s={14} /><span>Find</span></div>
            <div className="h-[22px] flex items-center gap-[5px] text-[#aaa]"><CircArrow up gray s={14} /><span>Previous Record</span></div>
            <div className="h-[22px] flex items-center gap-[5px]"><CircArrow s={14} /><span>Next Record</span></div>
          </div>
        </Group>
        <RSep />
        <Group w="w-[61px]" label="Filters" cls="justify-center">
          <Big w="w-[60px]" icon={<Funnel s={32} />} lines={["Filters"]} chev />
        </Group>
        <RSep />
        <Group w="w-[65px]" label="" cls="justify-center">
          <div className="w-[65px] pt-[41px] text-center leading-[13px]">
            <div>Full Text</div>
            <div className="flex justify-center items-center gap-[4px]">Search <Tri cls="opacity-50 scale-75" /></div>
          </div>
        </Group>
        <RSep />
        <Group w="w-[59px]" label="Close" cls="justify-center">
          <Big w="w-[58px]" icon={<CloseBig />} lines={["Close"]} />
        </Group>
        <RSep />
        <div className="pl-[17px] pt-[72px]"><Chev dir="up" c="#666" s={10} /></div>
      </div>
      <div className="h-[21px] shrink-0 flex border-b border-[#aaa] text-[#444]">
        <span className="w-[19px] border-r border-[#aaa]" />
        <span className="w-[314px] border-r border-[#aaa] pl-[3px] pr-[16px] leading-[22px] flex justify-between items-center">
          <span className="pt-[2px]">Record Type</span>
          <S s={8} v={8}><path d="M0 6h8L4 1z" fill="#777" /></S>
        </span>
        <span className="w-[314px] border-r border-[#aaa] pl-[3px] leading-[22px]">Description</span>
        <span className="flex-1 pl-[3px] leading-[22px]">Reference</span>
      </div>
      <div className="flex-1 min-h-0">
        {tableRows.map((r, i) => {
          const sel = i === 0;
          const bg = i === 2 ? "bg-[#f0f0f0]" : i === 0 ? "bg-white" : "bg-[#f8f8f8]";
          return (
            <div key={i} className={"h-[21px] flex border-b border-[#ccc] leading-[21px] " + bg}>
              <span className="w-[19px] border-r border-[#aaa] bg-white pl-[7px] flex items-center">
                {sel && <S s={7} v={7}><path d="M1 0l5 3.500L1 7z" fill="#666" /></S>}
              </span>
              <span className={"w-[314px] border-r border-[#ccc] pl-[3px] " + (sel ? "bg-[#c8e2f5] outline-1 -outline-offset-1 outline-dotted outline-[#555]" : "")}>{r[0]}</span>
              <span className={"w-[314px] border-r border-[#ccc] pl-[3px] " + (sel ? "outline-1 -outline-offset-1 outline-dotted outline-[#555]" : "")}>{r[1]}</span>
              <span className={"flex-1 pl-[3px] " + (sel ? "bg-[#c8e2f5] outline-1 -outline-offset-1 outline-dotted outline-[#555]" : "")}>{r[2]}</span>
            </div>
          );
        })}
      </div>
      <div className="h-[31px] shrink-0 border-t border-[#aaa]" />
      <div className="h-[24px] shrink-0 bg-[#0071c5] text-white flex items-center justify-between pl-[7px] pr-[2px]">
        <span className="pt-[2px]">User: AliceK_001000</span>
        <Grip />
      </div>
    </div>
  );
}

const Grip = () => (
  <S s={9} v={9}>
    <path d="M7 1h2v2H7zM7 4h2v2H7zM4 4h2v2H4zM7 7h2v2H7zM4 7h2v2H4zM1 7h2v2H1z" fill="#a8cbe8" />
  </S>
);

export default function App() {
  return (
    <div className="relative w-[1371px] h-[738px] bg-black pt-[4px] pb-[5px] pl-[5px] pr-[5px] overflow-hidden text-[11px] text-[#404040] font-['Roboto',sans-serif]">
      <div className="bg-white h-full flex flex-col">
        <div className="h-[32px] shrink-0 flex items-center pl-[6px]">
          <LogoSmall s={16} />
          <div className="flex items-center gap-[12px] ml-[11px]">
            <Clock /><Doc /><Mail /><Refresh /><GearBox /><Cal20 /><Clipboard />
          </div>
          <Tri cls="ml-[19px] opacity-60 scale-75" />
          <div className="flex-1 text-center text-[#555] pr-[129px]">1279: Company Banquet - Event - EventPro</div>
          <div className="flex items-center gap-[18px] pr-[14px]">
            <svg width="13" height="12" viewBox="0 0 13 12"><path d="M.5.500h12v11H.5z" fill="none" stroke="#aaa" /><path d="M1 2h11M6.500 10V4M4 6l2.500-2.500L9 6" stroke="#aaa" fill="none" /></svg>
            <WinBtns c="#b5b5b5" />
          </div>
        </div>
        <div className="h-[22px] shrink-0 flex items-center">
          <div className="w-[68px] h-[22px] bg-[#0071c5] shrink-0"><Logo /></div>
          <span className="ml-[16px] w-[53px] mt-[4px]">Home</span>
          <span className="w-[49px] mt-[4px]">View</span>
          <span className="mt-[4px]">Tools</span>
        </div>
        <div className="flex-1 flex min-h-0">
          <Sidebar />
          <div className="flex-1 min-w-0 flex flex-col">
            <div className="h-[27px] shrink-0 pt-[2px] border-b-2 border-[#a8a8a8] flex justify-between">
              <div className="w-[189px] h-[24px] bg-[#a8a8a8] text-white flex items-center pl-[12px] gap-[5px]">
                <Pin s={16} />
                <span className="flex-1 whitespace-nowrap pt-[2px]">1279: Company Banque...</span>
                <svg width="10" height="10" viewBox="0 0 10 10" className="mr-[9px] shrink-0"><path d="M1.500 1.500l7 7M8.500 1.500l-7 7" stroke="#fff" strokeWidth="1.700" /></svg>
              </div>
              <span className="pr-[6px] pt-[9px]"><Tri /></span>
            </div>
            <div className="flex-1 min-h-0 flex flex-col pl-[11px] pr-[11px] pt-[12px] pb-[12px]">
              <EventGroup />
              <div className="mt-[3px]"><TabStrip /></div>
              <div className="-mt-px flex-1 min-h-0 border border-[#aaa] flex flex-col">
                <Toolbar />
                <div className="h-[22px] shrink-0 flex items-center border-t border-b border-[#ccc]">
                  <span className="w-[18px] h-full border-r border-[#ccc]" />
                  <span className="w-[25px] h-full border-r border-[#ccc]" />
                  <span className="w-[30px] h-full border-r border-[#ccc]" />
                  <span className="pl-[3px]">Linked To</span>
                </div>
                <List />
                <div className="h-[30px] shrink-0 border-t border-[#aaa] flex pl-[552px] pt-[3px]">
                  <div className="w-[350px] h-[24px] border border-[#aaa] text-right pr-[3px] leading-[22px]">7</div>
                </div>
              </div>
            </div>
          </div>
        </div>
        <div className="h-[23px] shrink-0 bg-[#0071c5] flex justify-end items-end pr-[1px] pb-px"><Grip /></div>
      </div>
      <Modal />
      <svg className="absolute left-0 top-0 pointer-events-none" width="1371" height="738" viewBox="0 0 1371 738">
        <path d="M611 235L606 241 693 307 688 313 719 321 701 295 697 301z" fill="#f00" />
      </svg>
    </div>
  );
}
